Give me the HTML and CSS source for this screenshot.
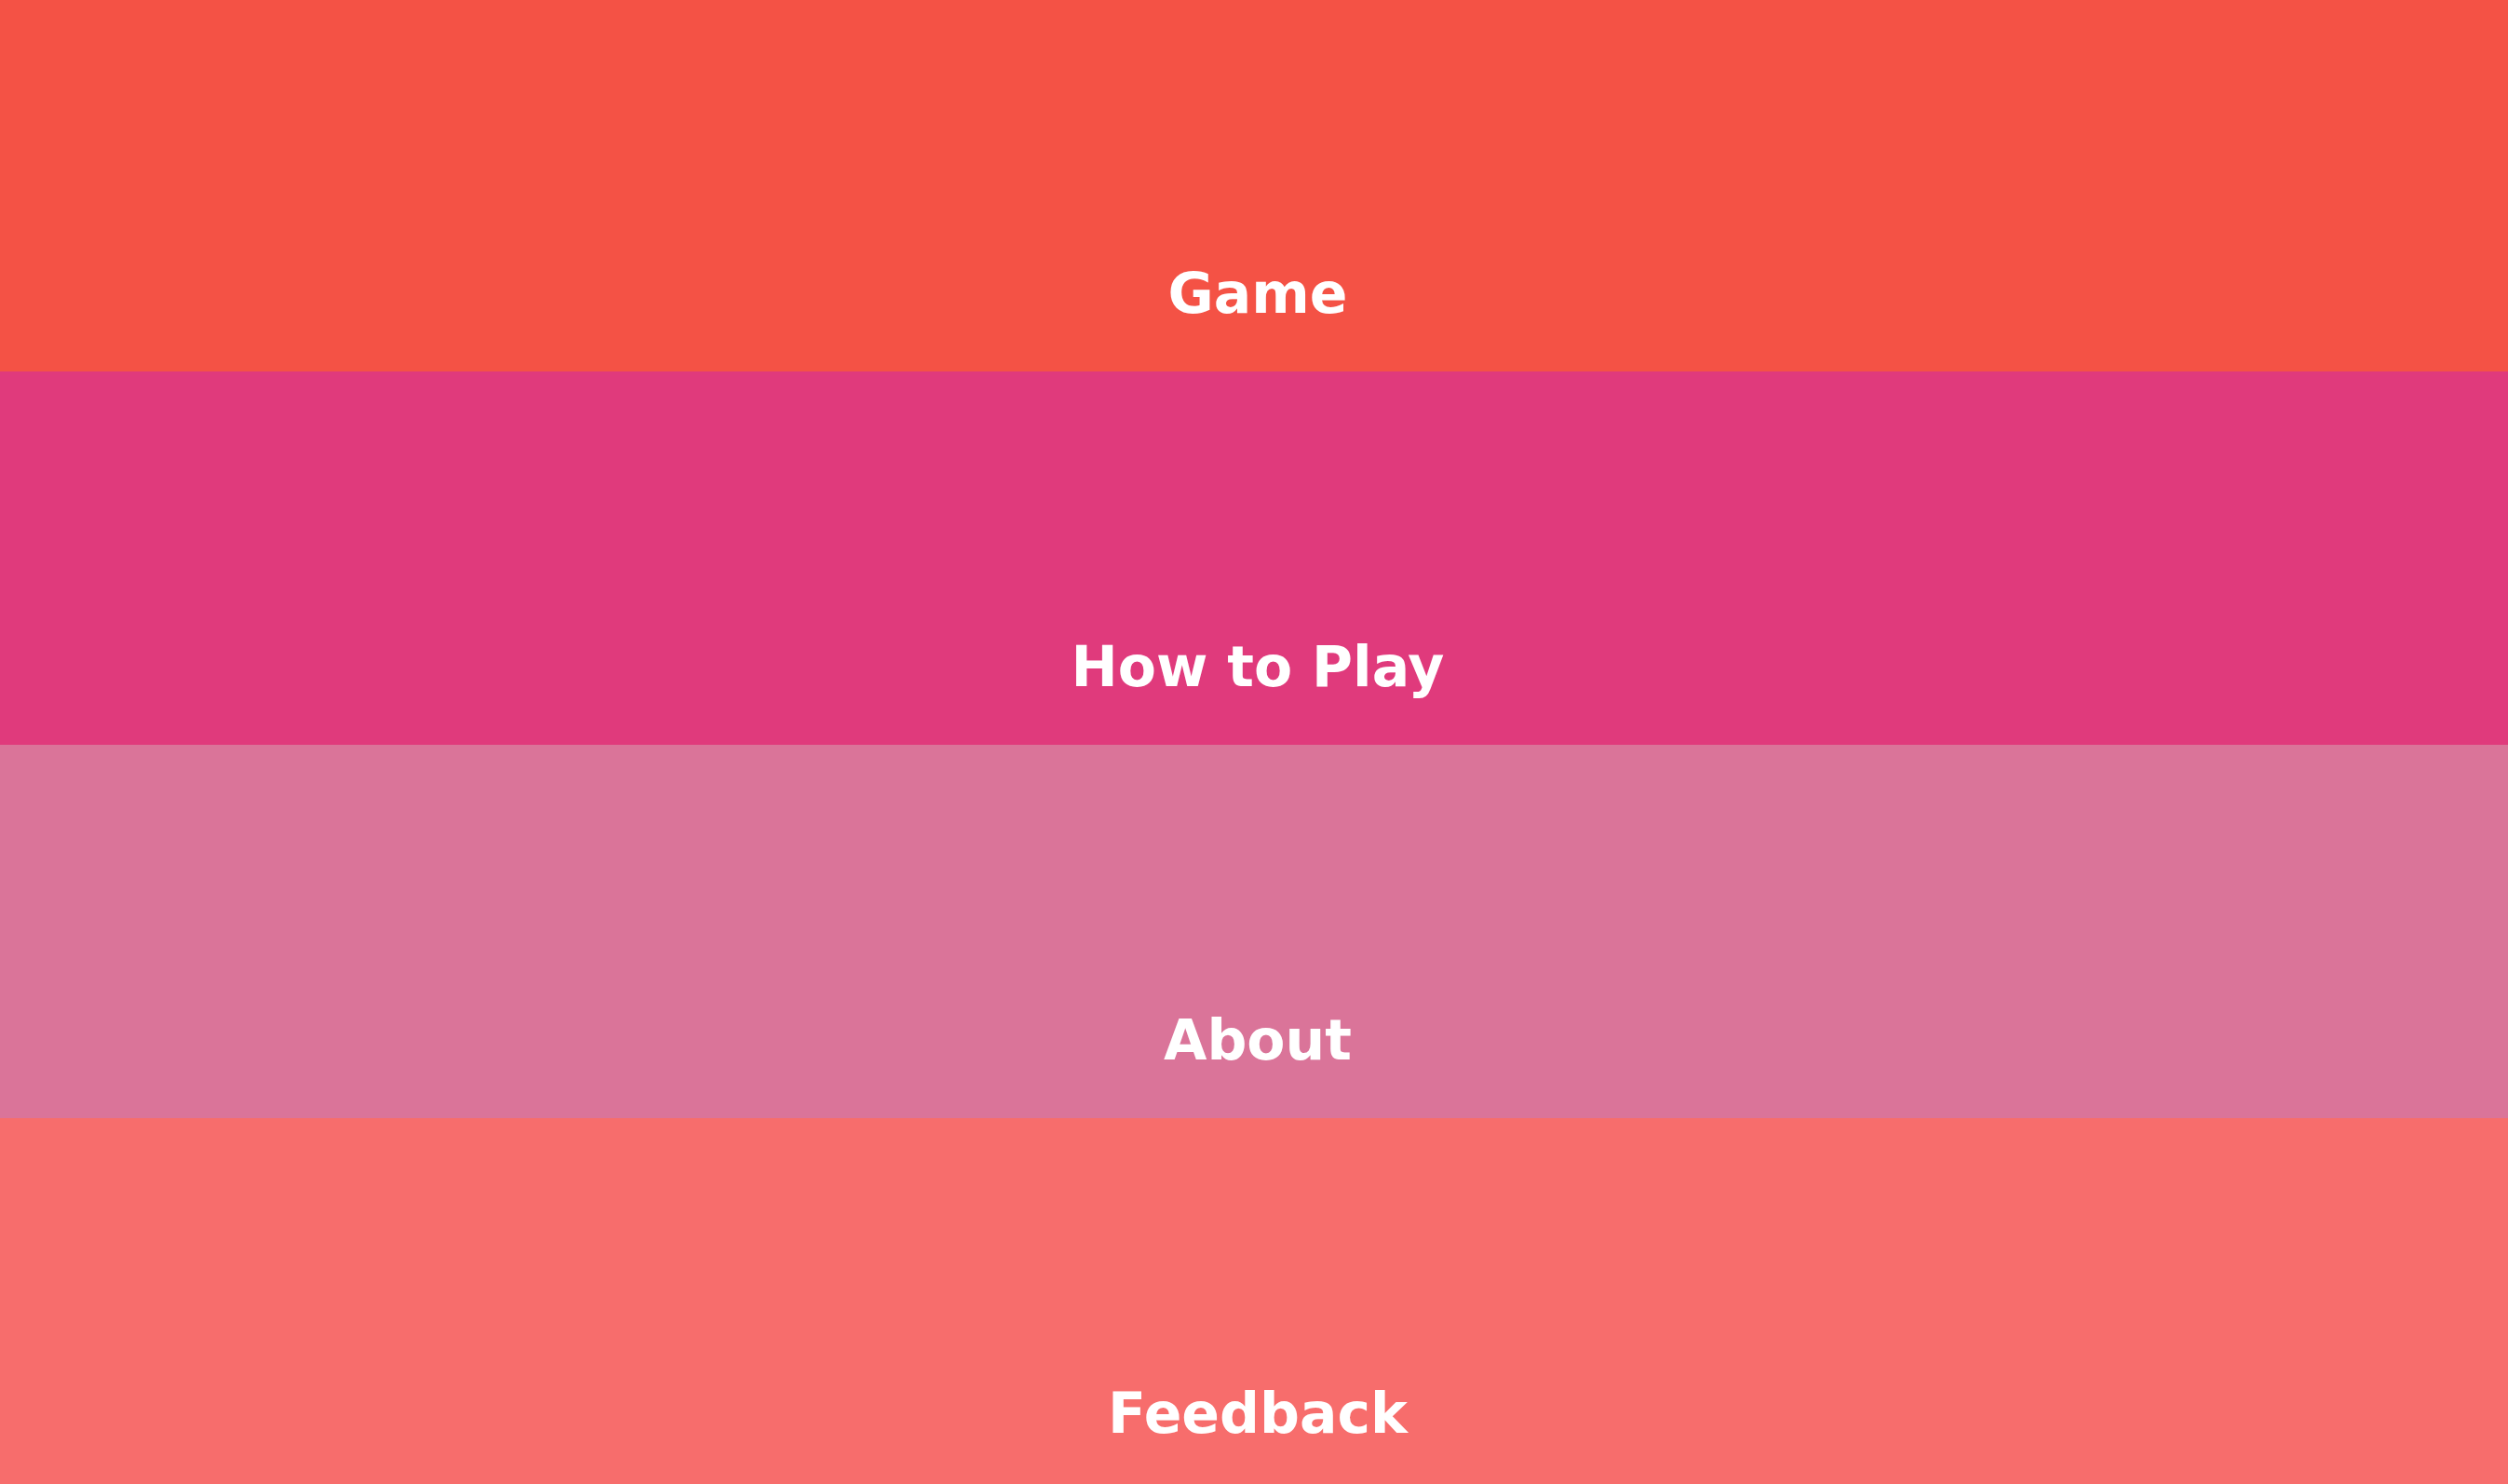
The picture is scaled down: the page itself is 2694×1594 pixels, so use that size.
FILE: index.html
```html
<!DOCTYPE html>
<html lang="en">
<head>
<meta charset="utf-8">
<title>Menu</title>
<link rel="stylesheet" href="styles.css">
</head>
<body>
<nav class="menu">
  <a class="menu-item item-game" href="#">Game</a>
  <a class="menu-item item-howto" href="#">How to Play</a>
  <a class="menu-item item-about" href="#">About</a>
  <a class="menu-item item-feedback" href="#">Feedback</a>
</nav>
</body>
</html>
```
FILE: styles.css
```css
html, body {
  margin: 0;
  padding: 0;
  height: 100%;
  overflow: hidden;
}
.menu {
  display: flex;
  flex-direction: column;
  margin-top: -2px;
}
.menu-item {
  flex: 0 0 401px;
  display: flex;
  align-items: flex-end;
  justify-content: center;
  padding-bottom: 49px;
  padding-left: 8px;
  box-sizing: border-box;
  font-family: "DejaVu Sans", sans-serif;
  font-weight: bold;
  font-size: 60px;
  line-height: normal;
  color: #ffffff;
  text-decoration: none;
}
.item-game { background: #f45245; }
.item-howto { background: #e03a7c; }
.item-about { background: #da7499; }
.item-feedback { background: #f76d6c; }
```
